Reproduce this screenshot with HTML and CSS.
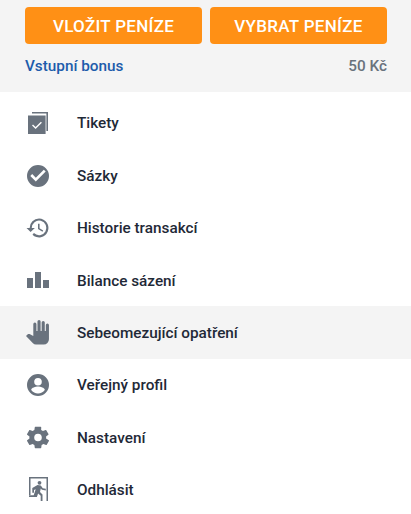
FILE: index.html
```html
<!DOCTYPE html>
<html>
<head>
    <title>Menu</title>
    <link rel="stylesheet" href="styles.css">
</head>
<body>
    <div class="top">
        <div class="top-buttons">
            <a class="btn">VLOŽIT PENÍZE</a>
            <a class="btn">VYBRAT PENÍZE</a>
        </div>
        <div class="bonus">
            <span class="bonus-name">Vstupní bonus</span>
            <span class="bonus-value">50 Kč</span>
        </div>
    </div>
    <ul class="menu">
        <li class="menu-item">
            <svg class="icon" viewBox="0 0 24 24"><path d="M6 1h16v19h-1.600V2.600H6z"/><path fill-rule="evenodd" d="M2 4.500h17.600V23H2zM6 14.500l1-1 2.600 2.600 5.300-5.300 1 1-6.300 6.300z"/></svg>
            <span>Tikety</span>
        </li>
        <li class="menu-item">
            <svg class="icon" viewBox="0 0 24 24"><path d="M12 1a11 11 0 1 0 0 22 11 11 0 0 0 0-22zm-2.200 16.500L4.300 12l1.900-1.900 3.600 3.600 8-8 1.900 1.900z"/></svg>
            <span>Sázky</span>
        </li>
        <li class="menu-item">
            <svg class="icon" viewBox="0.5 0.5 23 23"><path d="M13 3a9 9 0 0 0-9 9H1l3.900 3.900L9 12H6a7 7 0 1 1 2.100 4.900l-1.400 1.500A9 9 0 1 0 13 3zm-1 5v5l4.300 2.500.7-1.200-3.500-2.100V8z"/></svg>
            <span>Historie transakcí</span>
        </li>
        <li class="menu-item">
            <svg class="icon" viewBox="0 0 24 24"><path d="M1 9h6v10H1zM9 3h6v16H9zM17 11h6v8h-6z"/></svg>
            <span>Bilance sázení</span>
        </li>
        <li class="menu-item active">
            <svg class="icon" viewBox="0 1.500 23 23"><path d="M22 5.500V19a5 5 0 0 1-5 5H9.500a4 4 0 0 1-2.800-1.200L0 15.800l1.700-1.500c.5-.4 1.100-.5 1.700-.3L7 15.800V4.500a1.500 1.500 0 0 1 3 0V11h1V2a1.500 1.500 0 0 1 3 0v9h1V3a1.500 1.500 0 0 1 3 0v8h1V5.500a1.500 1.500 0 0 1 3 0z"/></svg>
            <span>Sebeomezující opatření</span>
        </li>
        <li class="menu-item">
            <svg class="icon" viewBox="0 0 24 24"><path d="M12 1a11 11 0 1 0 0 22 11 11 0 0 0 0-22zm0 4a3.800 3.800 0 1 1 0 7.600A3.800 3.800 0 0 1 12 5zm0 15.500a8.500 8.500 0 0 1-6.800-3.500c.1-2.200 4.500-3.400 6.800-3.400s6.700 1.200 6.800 3.400a8.500 8.500 0 0 1-6.800 3.500z"/></svg>
            <span>Veřejný profil</span>
        </li>
        <li class="menu-item">
            <svg class="icon" viewBox="0 0 24 24"><path transform="translate(12 11.500) scale(.95) translate(-12 -12)" d="M20.500 13.100a8.600 8.600 0 0 0 0-2.200l2.400-1.900c.2-.2.300-.5.100-.7l-2.300-4c-.1-.2-.4-.3-.7-.2l-2.800 1.100a8.500 8.500 0 0 0-1.900-1.100L15.400 1.100c0-.3-.3-.5-.6-.5H9.200c-.3 0-.5.200-.6.500l-.4 3a8.500 8.500 0 0 0-1.900 1.100L3.500 4.100c-.3-.1-.6 0-.7.200l-2.300 4c-.2.200-.1.500.1.700l2.400 1.900a8.600 8.600 0 0 0 0 2.200L.6 15c-.2.200-.3.500-.1.700l2.300 4c.1.200.4.300.7.200l2.800-1.100c.6.400 1.200.800 1.900 1.100l.4 3c.1.300.3.500.6.500h5.600c.3 0 .6-.2.600-.5l.4-3a8.500 8.500 0 0 0 1.900-1.100l2.800 1.100c.3.100.6 0 .7-.2l2.300-4c.2-.2.100-.5-.1-.7zM12 16a4 4 0 1 1 0-8 4 4 0 0 1 0 8z"/></svg>
            <span>Nastavení</span>
        </li>
        <li class="menu-item">
            <svg class="icon" viewBox="0 0 24 24"><path d="M3 -1h19v24h-1.500V.5H4.500V17H3z"/><circle cx="13.500" cy="4.800" r="1.900"/><path d="M11.500 7l3.300.6 2 2.600 3 .6v1.700l-3.900-.8-1.100-1.200-.8 3.500 2.500 2.400V23h-1.800v-5.200l-2.600-2.300-1.200 3.500H3v-1.800h4.700l2-6-1.700.8v2.800H6.300V10z"/></svg>
            <span>Odhlásit</span>
        </li>
    </ul>
</body>
</html>
```
FILE: styles.css
```css
body {
    margin: 0;
    font-family: Roboto, Arial, sans-serif;
    background: #fff;
    overflow: hidden;
}

.top {
    background: #f4f4f4;
    height: 92px;
    box-sizing: border-box;
    padding: 7px 24px 0 25px;
}
.top-buttons {
    display: flex;
    gap: 8px;
}
.btn {
    flex: 1;
    height: 37px;
    line-height: 38px;
    text-align: center;
    background: #ff9015;
    color: #fff;
    border-radius: 4px;
    font-size: 17px;
    font-weight: 500;
    letter-spacing: 0.3px;
}
.bonus {
    display: flex;
    justify-content: space-between;
    margin-top: 14px;
    font-size: 15.3px;
    font-weight: 500;
    line-height: 16px;
}
.bonus-name { color: #1d5cab; }
.bonus-value { color: #69727d; }

.menu {
    list-style: none;
    margin: 0;
    padding: 5.2px 0 0;
}
.menu-item {
    display: flex;
    align-items: center;
    height: 52.4px;
    padding-left: 26px;
    font-size: 15.3px;
    font-weight: 500;
    color: #1f2937;
}
.menu-item.active {
    background: #f4f4f4;
    box-shadow: 0 -1px 0 #f4f4f4;
}
.icon {
    width: 24px;
    height: 24px;
    margin-right: 27px;
    fill: #69727d;
    flex-shrink: 0;
    overflow: visible;
}
```
